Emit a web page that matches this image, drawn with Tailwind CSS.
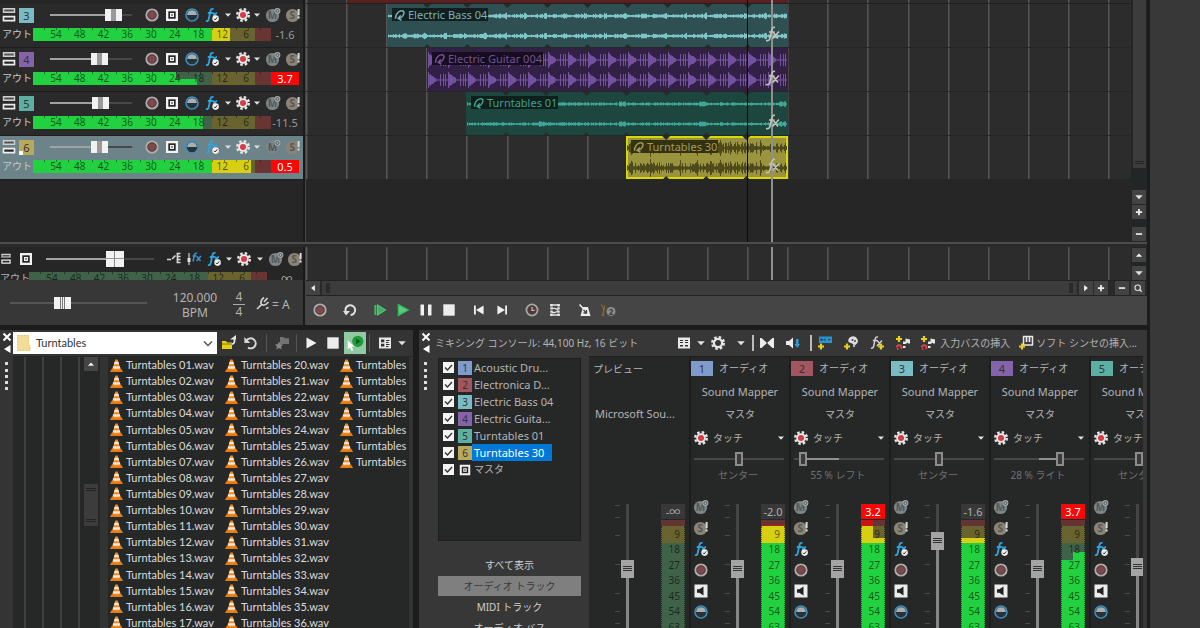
<!DOCTYPE html>
<html lang="ja">
<head>
    <meta charset="UTF-8">
    <meta name="viewport" content="width=device-width, initial-scale=1.0">
    <title>Turntables</title>
    <script src="https://cdn.jsdelivr.net/npm/@tailwindcss/browser@4"></script>
</head>
<body class="flex h-screen overflow-hidden bg-[#1c1c1c] font-['Noto_Sans','Noto_Sans_CJK_JP',sans-serif] text-[11px] leading-4 text-[#b4b4b4]">

    <!-- icon sprite, every symbol is drawn on a 16x16 box -->
    <svg class="hidden">
        <symbol id="rec" viewBox="0 0 16 16"><circle cx="8" cy="8" r="5.6" fill="#7c4a4c" stroke="#b0acac" stroke-width="2"/><circle cx="8" cy="8" r="4.2" fill="none" stroke="#4a3535" stroke-width=".8"/></symbol>
        <symbol id="sq" viewBox="0 0 16 16"><path fill="#f2f2f2" d="M2 2h12v12H2z"/><path fill="#262626" d="M4.3 4.3h7.4v7.4H4.3z"/><path fill="#f2f2f2" d="M6 6h4v4H6z"/><path fill="#444" d="M7.2 7.2h1.6v1.6H7.2z"/></symbol>
        <symbol id="phase" viewBox="0 0 16 16"><circle cx="8" cy="8" r="6" fill="#2a3238" stroke="#3a8fc0" stroke-width="1.6"/><path d="M3.2 8a4.8 4.8 0 0 1 9.6 0z" fill="#a9b0b2"/></symbol>
        <symbol id="fx" viewBox="0 0 16 16"><path d="M9.5 2.2C7.6 1.2 6.7 2.6 6.3 4.6L4.9 11.4C4.5 13.6 3.6 14.6 2 13.8M3.8 6h5M9 6.2c1.5 0 1.5 2 2 3.6M13 6c-1.6-.2-2.6 2.6-3.8 3.6" fill="none" stroke="#2fa3dc" stroke-width="1.9"/><circle cx="11.6" cy="11.6" r="3.3" fill="#eee"/><path d="M10 11.8l1.2 1.2 2-2.6" fill="none" stroke="#333"/></symbol>
        <symbol id="gear" viewBox="0 0 16 16"><circle cx="8" cy="8" r="5.8" fill="none" stroke="#e6e6e6" stroke-width="2.4" stroke-dasharray="2.5 2.055"/><circle cx="8" cy="8" r="4.8" fill="#f0eaea"/><circle cx="8" cy="8" r="3" fill="#d23c46"/></symbol>
        <symbol id="cog" viewBox="0 0 16 16"><circle cx="8" cy="8" r="5.8" fill="none" stroke="#e6e6e6" stroke-width="2.4" stroke-dasharray="2.5 2.055"/><circle cx="8" cy="8" r="4.1" fill="none" stroke="#e6e6e6" stroke-width="2.2"/></symbol>
        <symbol id="mute" viewBox="0 0 16 16"><circle cx="7.5" cy="8.5" r="6.6" fill="#7d8588"/><text x="7.5" y="12.3" font-size="10" font-weight="bold" text-anchor="middle" fill="#50585b">M</text><circle cx="12.4" cy="4" r="3" fill="#a9aeb0"/><circle cx="12.4" cy="4" r="1.5" fill="none" stroke="#555"/></symbol>
        <symbol id="solo" viewBox="0 0 16 16"><circle cx="7.5" cy="8.5" r="6.6" fill="#8a8478"/><text x="7.3" y="12.3" font-size="10" font-weight="bold" text-anchor="middle" fill="#5a564e">S</text><path d="M12.6 2h2v6h-2zM12.6 9.4h2v2h-2z" fill="#d8d8d8"/></symbol>
        <symbol id="stack" viewBox="0 0 16 16"><path d="M2.5 1.8h11v3.4h-11z" fill="#555" stroke="#cfcfcf" stroke-width="1.4"/><path d="M2.5 9.6h11v4h-11z" fill="#2a2a2a" stroke="#eee" stroke-width="1.6"/></symbol>
        <symbol id="caret" viewBox="0 0 16 16"><path d="M2 5h12L8 11.5z" fill="#e0e0e0"/></symbol>
        <symbol id="up" viewBox="0 0 16 16"><path d="M3 10.6h10L8 5.4z" fill="#f0f0f0"/></symbol>
        <symbol id="left" viewBox="0 0 16 16"><path d="M11 3v10L5 8z" fill="#f0f0f0"/></symbol>
        <symbol id="right" viewBox="0 0 16 16"><path d="M5 3v10l6-5z" fill="#f0f0f0"/></symbol>
        <symbol id="plus" viewBox="0 0 16 16"><path d="M6.6 3h2.8v3.6H13v2.8H9.4V13H6.6V9.4H3V6.6h3.6z" fill="#f0f0f0"/></symbol>
        <symbol id="minus" viewBox="0 0 16 16"><path d="M3 6.8h10v2.6H3z" fill="#f0f0f0"/></symbol>
        <symbol id="zoomer" viewBox="0 0 16 16"><circle cx="7.5" cy="7.5" r="4.4" fill="none" stroke="#ddd" stroke-width="1.8"/><path d="M10.5 10.5l3.5 3.5" stroke="#ddd" stroke-width="2.2"/></symbol>
        <symbol id="loop" viewBox="0 0 16 16"><path d="M4 10.5A4.9 4.9 0 1 1 8.6 13" fill="none" stroke="#e2e2e2" stroke-width="2"/><path d="M1 9h7l-4 4.6z" fill="#e2e2e2"/></symbol>
        <symbol id="undo" viewBox="0 0 16 16"><path d="M3.6 5.4A5 5 0 1 1 5 12.6" fill="none" stroke="#d6d6d6" stroke-width="2"/><path d="M1.4 2v6h6z" fill="#d6d6d6"/></symbol>
        <symbol id="playstart" viewBox="0 0 16 16"><path d="M2.4 3h2v10h-2z" fill="#35c25c"/><path d="M5.6 3L13.4 8l-7.8 5z" fill="#4aa868" stroke="#40d068" stroke-width="1.2"/></symbol>
        <symbol id="playg" viewBox="0 0 16 16"><path d="M3.4 2.6L13.2 8l-9.8 5.4z" fill="#5fc884" stroke="#2fbe58" stroke-width="1.4"/></symbol>
        <symbol id="playw" viewBox="0 0 16 16"><path d="M3.5 2.5L13.5 8l-10 5.5z" fill="#f0f0f0"/></symbol>
        <symbol id="pause" viewBox="0 0 16 16"><path d="M2.5 2.5H6v11H2.5zM10 2.5h3.5v11H10z" fill="#f0f0f0"/></symbol>
        <symbol id="stop" viewBox="0 0 16 16"><path d="M2.3 2.3h11.4v11.4H2.3z" fill="#ececec"/></symbol>
        <symbol id="first" viewBox="0 0 16 16"><path d="M3 3.4h1.8v9.2H3zM12.6 3.4v9.2L5 8z" fill="#f0f0f0"/></symbol>
        <symbol id="last" viewBox="0 0 16 16"><path d="M11.2 3.4H13v9.2h-1.8zM3.4 3.4v9.2L11 8z" fill="#f0f0f0"/></symbol>
        <symbol id="clock" viewBox="0 0 16 16"><circle cx="8" cy="8" r="5.6" fill="#4d3a3a" stroke="#aaa6a4" stroke-width="1.8"/><path d="M8 5v3.400h2.600" fill="none" stroke="#d0b8b0" stroke-width="1.2"/></symbol>
        <symbol id="ladder" viewBox="0 0 16 16"><path d="M4.5 2v12M11.5 2v12" fill="none" stroke="#e4e4e4" stroke-width="2.4" stroke-dasharray="2.4 .8"/><path d="M3 3h10M5 6.3h3l3 1.5M5 10.5h3l3-1.5M3 13h10" fill="none" stroke="#e4e4e4" stroke-width="1.3"/></symbol>
        <symbol id="metro" viewBox="0 0 16 16"><path d="M6 5h5l2.5 9h-10z" fill="#ececec"/><path d="M2.5 2.5L9 9.5" stroke="#ececec" stroke-width="1.5"/><path d="M6.5 8l3 3M9.5 8v3h-3" stroke="#444" fill="none" stroke-width="1.3"/></symbol>
        <symbol id="metrohelp" viewBox="0 0 16 16"><path d="M1 2.500l2.500 4V14M4.500 3v4L2 14" fill="none" stroke="#85652a" stroke-width="1.3"/><circle cx="11" cy="9.5" r="4.5" fill="#8d8d8d"/><text x="11" y="12.5" font-size="8" font-weight="bold" text-anchor="middle" fill="#3c3c3c">2</text></symbol>
        <symbol id="route" viewBox="0 0 16 16"><path d="M1 8.500h4M6 8l3.500-3.500M10.500 2.500h4M10.500 5.500h4M10.500 8.500h4M10.500 11.500h4M11.500 2v10" fill="none" stroke="#d8d8d8" stroke-width="1.6"/></symbol>
        <symbol id="busfx" viewBox="0 0 16 16"><path d="M3 2v12" stroke="#b8b8b8" stroke-width="1.4"/><path d="M1.500 7h3v4h-3z" fill="#e0e0e0"/><path d="M11 2.500C9 1.500 8.500 3.500 8.200 5L7 10.500M6.500 5h4M11 5.500l3.500 4.500M15 5l-4.500 5" fill="none" stroke="#3a94cc" stroke-width="1.5"/></symbol>
        <symbol id="fork" viewBox="0 0 16 16"><path d="M2 14L6.500 9.500C5 7 6 5 9 2.500M6.500 9.500c2.500 1.500 4.500.500 7-2.500M9 7l3.500-4M11 13.500l2.500-1" fill="none" stroke="#cfcfcf" stroke-width="1.7"/></symbol>
        <symbol id="folderup" viewBox="0 0 16 16"><path d="M1 6h4l1 1.500h5V14H1z" fill="#e4cf18"/><path d="M1 9h10" stroke="#8a7d10"/><path d="M11 9c3 0 2.500-3 2.500-6" fill="none" stroke="#e6e6e6" stroke-width="1.8"/><path d="M9 4.500h6V0z" fill="#e6e6e6"/></symbol>
        <symbol id="favfolder" viewBox="0 0 16 16"><path d="M6 2h3.500l1 1.300H15V9H6z" fill="#727272"/><path d="M5 6.500l1.300 2.700 3 .3-2.300 2 .7 3L5 13l-2.700 1.500.7-3-2.300-2 3-.3z" fill="#868686"/></symbol>
        <symbol id="views" viewBox="0 0 16 16"><path d="M2 2.500h12v11H2z" fill="#e8e8e8"/><path d="M4 4.500h3.300v2.800H4zM4 8.700h3.300v2.800H4zM9 5h3.500v1H9zM9 7h2.500v1H9zM9 9h3.500v1H9zM9 11h2.500v1H9z" fill="#333"/></symbol>
        <symbol id="mixviews" viewBox="0 0 16 16"><path d="M2 2.500h12v11H2z" fill="#e8e8e8"/><path d="M4 5h3v1H4zM4 7h3v1H4zM9 5h3v1H9zM9 7h3v1H9zM4 10h3v1.500H4zM9 10h3v1.500H9z" fill="#333"/></symbol>
        <symbol id="butter" viewBox="0 0 16 16"><path d="M1 3h1.500l5 4.500v1L2.500 13H1zM15 3h-1.500l-5 4.500v1l5 4.500H15z" fill="#ececec"/></symbol>
        <symbol id="dim" viewBox="0 0 16 16"><path d="M1 6h3l4-3.500v11L4 10H1z" fill="#ececec"/><path d="M11 4h2.500v5H15l-2.800 4L9.500 9H11z" fill="#2c9bd8"/></symbol>
        <symbol id="addbus" viewBox="0 0 16 16"><path d="M2 1.500h13v6.500H2z" fill="#2b93cf"/><path d="M4 3.500v2.500M4 4.700h2.500M8 3.500v2.500M11 4.700h2.500" stroke="#123f5c" fill="none"/><path d="M4 8.500v6M1 11.500h6" stroke="#e6cf20" stroke-width="2.2"/></symbol>
        <symbol id="addmix" viewBox="0 0 16 16"><path d="M5.500 7a4.700 4.700 0 1 1 7 3L9 8.500z" fill="#dedede"/><path d="M10 9h2v3h-2z" fill="#bbb"/><circle cx="9.5" cy="5" r="1" fill="#444"/><circle cx="12" cy="6" r="1" fill="#444"/><path d="M4 8.500v6M1 11.500h6" stroke="#e6cf20" stroke-width="2.2"/></symbol>
        <symbol id="addfx" viewBox="0 0 16 16"><path d="M9 2.200C7 1.200 6.300 3 6 4.800L4.700 11C4.300 13 3.300 13.600 2 13M3.800 5.500h5M8.500 6l4 5M13 5.500L8 11" fill="none" stroke="#d0d0d0" stroke-width="1.5"/><path d="M12 8.500v6M9 11.500h6" stroke="#e6cf20" stroke-width="2.2"/></symbol>
        <symbol id="addin" viewBox="0 0 16 16"><path d="M4 1v6M1 4h6" stroke="#e6cf20" stroke-width="2.2"/><path d="M8 6.500h2.500V3.500l4.500 1v4h-2V7.500L10.500 9H8z" fill="#e8e8e8"/><path d="M2 12.500a2.200 2.200 0 0 1 4.400 0v1.500M2 14h1.500" fill="none" stroke="#d8404c" stroke-width="2"/><path d="M8 12h2.500" stroke="#e8e8e8" stroke-width="2"/></symbol>
        <symbol id="addsynth" viewBox="0 0 16 16"><path d="M5.500 1.500h9v8.500h-9z" fill="#3a3a3a" stroke="#e8e8e8" stroke-width="1.5"/><path d="M8.500 2v5M11.500 2v5" stroke="#e8e8e8" stroke-width="1.7"/><path d="M4 8.500v6M1 11.500h6" stroke="#e6cf20" stroke-width="2.2"/></symbol>
        <symbol id="spk" viewBox="0 0 16 16"><path d="M1.500 1.500h13v13h-13z" fill="#ececec"/><path d="M4 6.300h2.300L10.500 3.500v9L6.300 9.700H4z" fill="#222"/></symbol>
        <symbol id="autoplay" viewBox="0 0 16 16"><circle cx="10.5" cy="6.5" r="5" fill="#1f9a3a"/><path d="M9 4v5l4-2.500z" fill="#0d5520"/><path d="M1.500 5.500l6 5.500-2.700.300L6.500 14.500l-1.600.500L3.500 12 1.500 13.500z" fill="#fff"/></symbol>
        <symbol id="cone" viewBox="0 0 16 16"><path d="M3 11.500h10l2 3.500H1z" fill="#e87a12"/><path d="M6.800 1.500h2.400L12.500 12c-2 1.500-7 1.500-9 0z" fill="#f08a1c"/><path d="M6 4h4l.800 2.600H5.200zM4.500 8.800h7l.600 2c-2 1-6.300 1-8.200 0z" fill="#f0e8dc"/></symbol>
        <symbol id="wavloop" viewBox="0 0 16 16"><path d="M2 13c0-6 3-9 7-10.500 4-.5 5 1.500 4 4-1 3-3.500 5.500-7 6M9 8.500l-3.500 4L10 15" fill="none" stroke="currentColor" stroke-width="2"/></symbol>
        <symbol id="evfx" viewBox="0 0 16 16"><path d="M10 1.500C8 .500 7 3 6.500 5l-1.500 7C4.500 14.500 3 15 1 14.500M4 6h5.500M8.500 6.500l4.500 6M14 5.500L7.500 12.500" fill="none" stroke="#c4c4b8" stroke-width="1.6"/></symbol>
    </svg>

    <main class="flex min-w-0 flex-1 flex-col">

        <!-- track headers and timeline -->
        <section class="flex h-[242px] shrink-0 overflow-hidden">
            <div class="flex w-[303px] shrink-0 flex-col bg-[#262626] pt-1" id="tracks"></div>
            <div class="w-[3px] shrink-0 border-r border-[#444] bg-[#1a1a1a]"></div>
            <div class="relative flex min-w-0 flex-1 flex-col overflow-hidden bg-[#262626]" id="timeline">
                <svg class="absolute inset-x-0 top-0 h-[179px] w-full bg-[#2c2c2c]" data-grid></svg>
            </div>
            <div class="flex w-4 shrink-0 flex-col items-center bg-[#232626]">
                <div class="flex h-[168px] w-[13px] flex-col justify-end bg-[#3c3c3c] pb-1"><div class="mx-0.5 h-[3px] border-y border-[#222]"></div></div>
                <button class="mt-[22px] h-3.5 w-3.5 bg-[#434343] p-0.5" aria-label="下へ"><svg class="size-2.5"><use href="#caret"/></svg></button>
                <button class="mt-px h-3.5 w-3.5 bg-[#434343] p-0.5" aria-label="高さを拡大"><svg class="size-2.5"><use href="#plus"/></svg></button>
                <button class="mt-2 h-3.5 w-3.5 bg-[#434343] p-0.5" aria-label="高さを縮小"><svg class="size-2.5"><use href="#minus"/></svg></button>
            </div>
        </section>
        <div class="h-[5px] shrink-0 border-t-2 border-[#4c4c4c] bg-[#2a2a2a]"></div>

        <!-- master bus, tempo, transport -->
        <section class="flex shrink-0">
            <div class="flex w-[303px] shrink-0 flex-col">
                <div class="h-[33px] overflow-hidden bg-[#262626]" id="bus"></div>
                <div class="flex h-[45px] items-center bg-[#373737]">
                    <input type="range" aria-label="再生速度" max="121" value="44" class="ml-2.5 h-3 w-[137px] appearance-none bg-[linear-gradient(#555,#555)] bg-[size:100%_2px] bg-center bg-no-repeat [&::-webkit-slider-thumb]:h-3 [&::-webkit-slider-thumb]:w-[17px] [&::-webkit-slider-thumb]:appearance-none [&::-webkit-slider-thumb]:bg-[linear-gradient(to_right,#f2f2f2_6px,#777_6px_7px,#f2f2f2_7px_8px,#777_8px_9px,#f2f2f2_9px_10px,#777_10px_11px,#f2f2f2_11px)]">
                    <div class="ml-5 w-14 pt-1 text-center text-xs leading-[15px]">120.000<br>BPM</div>
                    <div class="ml-2.5 w-3 pt-1 text-center text-xs leading-[14px]"><div class="border-b border-[#aaa]">4</div><div>4</div></div>
                    <svg class="ml-2.5 size-4"><use href="#fork"/></svg>
                    <span class="ml-px pt-1 text-xs">= A</span>
                </div>
            </div>
            <div class="w-[3px] shrink-0 border-r border-[#444] bg-[#1a1a1a]"></div>
            <div class="flex min-w-0 flex-1 flex-col">
                <div class="flex h-[33px]">
                    <div class="relative min-w-0 flex-1 bg-[#2c2c2c]">
                        <svg class="h-full w-full" data-grid></svg>
                        <div class="absolute inset-y-0 left-[465px] w-0.5 bg-[#8f8f8f]"></div>
                    </div>
                    <div class="flex w-4 flex-col items-center gap-1 bg-[#232626] pt-px">
                        <button class="h-3.5 w-3.5 shrink-0 bg-[#434343] p-0.5" aria-label="上へ"><svg class="size-2.5"><use href="#up"/></svg></button>
                        <button class="h-3.5 w-3.5 shrink-0 bg-[#434343] p-0.5" aria-label="下へ"><svg class="size-2.5"><use href="#caret"/></svg></button>
                    </div>
                </div>
                <div class="flex h-4 items-center border-y border-[#222] bg-[#2a2a2a]">
                    <button class="h-3.5 w-3.5 bg-[#434343] p-0.5" aria-label="左へ"><svg class="size-2.5"><use href="#left"/></svg></button>
                    <div class="ml-0.5 flex h-3.5 flex-1 items-center justify-between bg-[#3c3c3c] px-1"><div class="h-2.5 w-1 bg-[#2a2a2a]"></div><div class="h-2.5 w-1 bg-[#2a2a2a]"></div></div>
                    <button class="ml-0.5 h-3.5 w-3.5 bg-[#434343] p-0.5" aria-label="右へ"><svg class="size-2.5"><use href="#right"/></svg></button>
                    <button class="ml-px h-3.5 w-3.5 bg-[#434343] p-0.5" aria-label="拡大"><svg class="size-2.5"><use href="#plus"/></svg></button>
                    <button class="ml-[7px] h-3.5 w-3.5 bg-[#434343] p-0.5" aria-label="縮小"><svg class="size-2.5"><use href="#minus"/></svg></button>
                    <button class="mr-0.5 ml-0.5 h-3.5 w-3.5 bg-[#434343] p-0.5" aria-label="ズーム"><svg class="size-2.5"><use href="#zoomer"/></svg></button>
                </div>
                <div class="flex h-[29px] items-center bg-[#454545] pb-0.5 pl-0.5" id="transport"></div>
            </div>
        </section>

        <section class="mt-[5px] flex min-h-0 flex-1">
            <!-- explorer -->
            <div class="flex w-[413px] shrink-0 bg-[#343434]">
                <div class="flex w-[13px] shrink-0 flex-col items-center" data-dock></div>
                <div class="flex min-w-0 flex-1 flex-col">
                    <div class="flex h-[26px] shrink-0 items-center">
                        <div class="relative h-[22px] w-[204px]">
                            <select aria-label="フォルダー" class="h-full w-full appearance-none bg-white pl-[23px] font-['Lato','Noto_Sans_CJK_JP',sans-serif] text-[11px] text-[#333]"><option>Turntables</option></select>
                            <svg class="pointer-events-none absolute top-[3px] left-1 h-4 w-3.5"><path d="M.5.500h11v10h1.500v5H.5z" fill="#f3dc95" stroke="#e2c56a" stroke-dasharray="2 1"/></svg>
                            <svg class="pointer-events-none absolute top-2 right-1 h-2 w-2.5"><path d="M1 1.500l4 4 4-4" fill="none" stroke="#555" stroke-width="1.5"/></svg>
                        </div>
                        <button class="ml-px w-[22px]" aria-label="上のフォルダー"><svg class="mx-auto size-4"><use href="#folderup"/></svg></button>
                        <button class="w-[22px]" aria-label="更新"><svg class="mx-auto size-4"><use href="#undo"/></svg></button>
                        <i class="ml-1 h-[18px] w-px bg-[#555]"></i>
                        <button class="w-[29px]" aria-label="お気に入り"><svg class="mx-auto size-4"><use href="#favfolder"/></svg></button>
                        <i class="h-[18px] w-px bg-[#555]"></i>
                        <button class="ml-[3px] w-[22px]" aria-label="再生"><svg class="mx-auto size-4"><use href="#playw"/></svg></button>
                        <button class="w-[22px]" aria-label="停止"><svg class="mx-auto size-4"><use href="#stop"/></svg></button>
                        <button class="h-[22px] w-[22px] bg-[#8fcaa3]" aria-label="自動プレビュー"><svg class="mx-auto size-[18px]"><use href="#autoplay"/></svg></button>
                        <i class="ml-[3px] h-[18px] w-px bg-[#555]"></i>
                        <button class="ml-1 w-[22px]" aria-label="表示"><svg class="mx-auto size-4"><use href="#views"/></svg></button>
                        <button class="w-3" aria-label="表示メニュー"><svg class="mx-auto size-2.5"><use href="#caret"/></svg></button>
                    </div>
                    <div class="flex min-h-0 flex-1 bg-[#262828] pt-px">
                        <div class="flex w-[69px] shrink-0 justify-between pr-0.5 pl-[11px]">
                            <i class="w-0.5 bg-[#3f4040]"></i><i class="w-0.5 bg-[#3f4040]"></i><i class="w-0.5 bg-[#3f4040]"></i><i class="w-0.5 bg-[#3f4040]"></i>
                        </div>
                        <div class="flex w-[18px] shrink-0 flex-col items-center">
                            <button class="h-3.5 w-3.5 shrink-0 bg-[#454545] p-0.5" aria-label="上へ"><svg class="size-2.5"><use href="#up"/></svg></button>
                            <div class="mt-[113px] flex h-[42px] w-3.5 shrink-0 flex-col justify-between bg-[#3c3c3c] px-0.5 py-1"><i class="h-[3px] border-y border-[#222]"></i><i class="h-[3px] border-y border-[#222]"></i></div>
                        </div>
                        <div class="w-2 shrink-0 bg-[#333]"></div>
                        <div class="min-w-0 flex-1 overflow-hidden">
                            <ul class="ml-px grid h-[274px] grid-flow-col grid-rows-[repeat(17,1fr)] justify-start font-['Lato',sans-serif] text-[11px] text-[#dcdcdc]" id="files"></ul>
                        </div>
                        <div class="w-1 shrink-0 bg-[#333]"></div>
                    </div>
                </div>
            </div>

            <!-- mixing console -->
            <div class="ml-1.5 flex min-w-0 flex-1 bg-[#373737]">
                <div class="flex w-[13px] shrink-0 flex-col items-center" data-dock></div>
                <div class="flex min-w-0 flex-1 flex-col">
                    <div class="flex h-[26px] shrink-0 items-center pl-[3px] text-[10px] whitespace-nowrap">
                        <h1>ミキシング コンソール: 44,100 Hz, 16 ビット</h1>
                        <div class="mr-2.5 ml-auto flex items-center">
                            <button class="w-6" aria-label="表示"><svg class="mx-auto size-4"><use href="#mixviews"/></svg></button>
                            <button class="w-2.5" aria-label="表示メニュー"><svg class="mx-auto size-2.5"><use href="#caret"/></svg></button>
                            <button class="w-6" aria-label="設定"><svg class="mx-auto size-4"><use href="#cog"/></svg></button>
                            <button class="w-[22px]" aria-label="設定メニュー"><svg class="mx-auto size-2.5"><use href="#caret"/></svg></button>
                            <i class="h-4 w-0.5 bg-[#bbb]"></i>
                            <button class="w-[26px]" aria-label="ダウンミックス"><svg class="mx-auto size-4"><use href="#butter"/></svg></button>
                            <button class="w-[26px]" aria-label="ディム"><svg class="mx-auto size-4"><use href="#dim"/></svg></button>
                            <i class="ml-1 h-4 w-0.5 bg-[#bbb]"></i>
                            <button class="w-[26px]" aria-label="トラックの挿入"><svg class="mx-auto size-4"><use href="#addbus"/></svg></button>
                            <button class="w-[26px]" aria-label="バスの挿入"><svg class="mx-auto size-4"><use href="#addmix"/></svg></button>
                            <button class="w-[26px]" aria-label="エフェクトの挿入"><svg class="mx-auto size-4"><use href="#addfx"/></svg></button>
                            <button class="w-[26px]" aria-label="入力の挿入"><svg class="mx-auto size-4"><use href="#addin"/></svg></button>
                            <button class="ml-1 flex items-center gap-1"><svg class="size-4"><use href="#addin"/></svg>入力バスの挿入</button>
                            <button class="ml-2 flex items-center gap-0.5"><svg class="size-4"><use href="#addsynth"/></svg>ソフト シンセの挿入...</button>
                        </div>
                    </div>
                    <div class="flex min-h-0 flex-1 overflow-hidden">
                        <div class="ml-1.5 flex w-[143px] shrink-0 flex-col pt-0.5 text-[10px]">
                            <ul class="flex h-[183px] shrink-0 flex-col border border-[#1e1e1e] bg-[#262828]" id="channels"></ul>
                            <button class="mt-3 h-[23px] shrink-0 text-[#cfcfcf]">すべて表示</button>
                            <button class="h-5 shrink-0 bg-[#7f7f7f] text-[#3a3a3a]">オーディオ トラック</button>
                            <button class="h-[22px] shrink-0 text-[#cfcfcf]">MIDI トラック</button>
                            <button class="h-5 shrink-0 text-[#cfcfcf]">オーディオ バス</button>
                        </div>
                        <div class="mr-1 ml-2 flex min-w-0 flex-1 overflow-hidden border-t border-[#1c1c1c] bg-[#262828]" id="strips"></div>
                    </div>
                </div>
            </div>
        </section>
    </main>
    <aside class="w-[53px] shrink-0 border-l-[3px] border-[#1c1c1c] bg-[#383838]"></aside>

    <script>
        const byId = (id) => document.getElementById(id);
        const icon = (name, cls = 'size-4') => `<svg class="${cls}"><use href="#${name}"/></svg>`;
        const cell = (name, label, w = 'w-5', cls = 'size-4') =>
            `<button class="${w} flex shrink-0 justify-center" aria-label="${label}">${icon(name, cls)}</button>`;

        // ---- track headers ----
        // level is the lit length in px of the upper and lower channel
        const tracks = [
            { n: 3, bg: 'bg-[#79bcc4]', vol: 56, level: [197, 197], peak: '-1.6' },
            { n: 4, bg: 'bg-[#8563ab]', vol: 42, level: [143, 164], peak: '3.7', clip: true },
            { n: 5, bg: 'bg-[#5cb0a2]', vol: 43, level: [170, 170], peak: '-11.5' },
            { n: 6, bg: 'bg-[#b9a95c]', vol: 42, level: [218, 218], peak: '0.5', clip: true, selected: true },
        ];
        const scale = [54, 48, 42, 36, 30, 24, 18, 12, 6];

        function levelBar(level) {
            const lit = level.map(px => `<div class="h-1/2 bg-[linear-gradient(to_right,#22d13f_179px,#d6cf12_179px_222px,#a01818_222px)]" style="width:${px}px"></div>`).join('');
            return `<div class="relative h-[13px] w-[238px] shrink-0 bg-[linear-gradient(to_right,#3f6248_179px,#68632f_179px_222px,#693434_222px)] text-[10px] leading-[13px] text-black/60">
                <div class="h-full">${lit}</div>
                <div class="absolute inset-0 bg-[repeating-linear-gradient(to_right,transparent_0_11px,#0006_11px_12px)] bg-[size:100%_2px] bg-[position:0_0,0_100%] bg-repeat-x"></div>
                <div class="absolute inset-y-0 left-[11px] grid w-[214px] grid-cols-9 text-center">${scale.map(s => `<span>${s}</span>`).join('')}</div>
            </div>`;
        }

        function trackRow(t) {
            return `<div class="h-11 shrink-0 border-b border-[#1e1e1e] ${t.selected ? 'bg-[#6c8489]' : 'bg-[#2a2a2a]'}">
                <div class="flex h-[22px] items-center">
                    ${cell('stack', 'トラックの表示', 'w-[17px]', 'size-4')}
                    <span class="relative ml-0.5 h-[15px] w-[15px] ${t.bg} text-center text-[11px] leading-[15px] text-[#333]">${t.n}${t.selected ? '<i class="absolute bottom-0 left-0 size-1 bg-white"></i>' : ''}</span>
                    <input type="range" aria-label="トラック ${t.n} の音量" max="66" value="${t.vol}" style="--v:${t.vol / 66 * 100}%" class="mx-4 h-3 w-[82px] appearance-none bg-[linear-gradient(to_right,#a2a2a2_var(--v),#484848_var(--v))] bg-[size:100%_2px] bg-center bg-no-repeat [&::-webkit-slider-thumb]:h-3 [&::-webkit-slider-thumb]:w-[17px] [&::-webkit-slider-thumb]:appearance-none [&::-webkit-slider-thumb]:bg-[linear-gradient(to_right,#f2f2f2_6px,#999_6px_11px,#f2f2f2_11px)]">
                    <span class="-ml-1.5 flex items-center">
                        ${cell('rec', '録音')}${cell('sq', 'バス')}${cell('phase', '位相')}${cell('fx', 'エフェクト')}${cell('caret', 'エフェクト メニュー', 'w-3', 'size-2')}${cell('gear', 'オートメーション', 'w-[17px]')}${cell('caret', 'オートメーション メニュー', 'w-3', 'size-2')}${cell('mute', 'ミュート')}${cell('solo', 'ソロ')}
                    </span>
                </div>
                <div class="flex items-center pt-0.5">
                    <span class="w-[33px] pl-0.5 text-[10px] leading-[13px] whitespace-nowrap text-[#c8c8c8]">アウト</span>
                    ${levelBar(t.level)}
                    <span class="h-[13px] w-7 text-center text-[11px] leading-[13px] ${t.clip ? 'bg-[#fb0505] text-white' : 'text-[#999]'}">${t.peak}</span>
                </div>
            </div>`;
        }
        byId('tracks').innerHTML = tracks.map(trackRow).join('');

        byId('bus').innerHTML = `<div class="flex h-6 items-center">
                ${cell('stack', 'バスの表示', 'w-3', 'size-4')}
                ${cell('sq', 'マスタ', 'ml-1.5 w-4', 'size-4')}
                <input type="range" aria-label="マスタの音量" max="90" value="60" style="--v:63%" class="ml-3 h-4 w-[108px] appearance-none bg-[linear-gradient(to_right,#a2a2a2_var(--v),#484848_var(--v))] bg-[size:100%_2px] bg-center bg-no-repeat [&::-webkit-slider-thumb]:h-4 [&::-webkit-slider-thumb]:w-[18px] [&::-webkit-slider-thumb]:appearance-none [&::-webkit-slider-thumb]:bg-[linear-gradient(to_right,transparent_8px,#888_8px_9px,transparent_9px),linear-gradient(#f2f2f2_7px,#999_7px_8px,#f2f2f2_8px)]">
                <span class="ml-2.5 flex items-center">${cell('route', 'ルーティング')}${cell('busfx', 'バス エフェクト')}${cell('fx', 'エフェクト')}${cell('caret', 'エフェクト メニュー', 'w-2.5', 'size-2')}${cell('gear', 'オートメーション')}${cell('caret', 'オートメーション メニュー', 'w-3', 'size-2')}${cell('mute', 'ミュート')}${cell('solo', 'ソロ', 'w-[17px]')}</span>
            </div>
            <div class="flex pt-px"><span class="w-[29px] shrink-0 overflow-hidden text-[10px] leading-[13px] whitespace-nowrap">アウト</span>${levelBar([0, 0])}<span class="w-9 text-center leading-[13px]">-∞</span></div>`;

        // ---- transport ----
        byId('transport').innerHTML = [['rec', '録音'], ['loop', 'ループ再生', 1], ['playstart', '先頭から再生', 1], ['playg', '再生'], ['pause', '一時停止'], ['stop', '停止'],
            ['first', '先頭へ', 1], ['last', '末尾へ'], ['clock', 'タップ テンポ', 1], ['ladder', 'グリッド'], ['metro', 'メトロノーム', 1], ['metrohelp', 'カウントイン']]
            .map(([n, label, gap]) => cell(n, label, gap ? 'ml-[7px] w-[23px]' : 'w-[23px]')).join('');

        // ---- timeline ----
        const BEAT = 40.1;
        document.querySelectorAll('[data-grid]').forEach(svg => {
            let lines = '';
            for (let i = 0; i < 21; i++) lines += `<rect x="${Math.round(i * BEAT)}" width="1.5" height="100%" fill="#565656"/>`;
            svg.innerHTML = lines;
        });

        const noise = (i) => Math.abs(Math.sin(i * 12.9898) * 43758.5453) % 1;
        // half height of the waveform at x
        const shapes = {
            bass: x => 0.8 + 1.6 * noise(x) * (x % 20 > 5 ? 1 : 0.4) + (x % 20 > 16 ? 1 : 0),
            guitar: x => { const p = x % 20; return p === 1 ? 8 : p > 1 && p < 9 ? 7 - p * 0.7 + noise(x) : p === 13 || p === 16 || p === 18 ? 6 : 0.6; },
            thin: x => 0.6 + noise(x) * 1.2 + (x % 80 > 72 ? 1 : 0),
            scratch: x => { const p = x % 40; return 0.8 + (noise(x) > 0.4 ? noise(x + 3) * 5 : 1) + (p > 3 && p < 7 ? 3 : p === 14 || p === 24 || p === 31 ? 3 : 0); },
        };
        const clips = [
            { name: 'Electric Bass 04', start: 81, end: 482, kind: 'bass', wave: '#7fc4c6', bg: 'bg-[#2e5052]', text: 'text-[#7ab5b8]', label: 'bg-[#131f1f]' },
            { name: 'Electric Guitar 004', start: 121, end: 482, kind: 'guitar', wave: '#7450a0', bg: 'bg-[#332045]', text: 'text-[#72529a]', label: 'bg-[#160e1e]' },
            { name: 'Turntables 01', start: 160, end: 482, kind: 'thin', wave: '#3fa596', bg: 'bg-[#1d463f]', text: 'text-[#3fa18e]', label: 'bg-[#0f201c]' },
            { name: 'Turntables 30', start: 320, end: 482, kind: 'scratch', wave: '#4e4a1c', bg: 'bg-[#9a943f] outline-2 -outline-offset-2 outline-[#d8d60e]', text: 'text-[#a09b62]', label: 'bg-[#35330f]' },
        ];

        function waveform(c) {
            const w = c.end - c.start;
            let d = '';
            for (let x = 1; x < w - 1; x++) {
                const a = shapes[c.kind](x);
                [12, 32].forEach(y => { d += `M${x + 0.5} ${(y - a).toFixed(1)}v${(a * 2).toFixed(1)}`; });
            }
            // loop notches on both edges
            let notch = '';
            for (let x = BEAT; x < w - 4; x += BEAT) notch += `M${x - 4} 0h8l-4 4zM${x - 4} 44h8l-4-4z`;
            return `<svg class="absolute inset-0 h-full w-full"><path d="${d}" stroke="${c.wave}"/><path d="${notch}" fill="#2a2a2a"/></svg>`;
        }

        byId('timeline').insertAdjacentHTML('beforeend', `
            <div class="relative h-1 shrink-0 border-b border-[#202020]"><div class="absolute inset-y-0 left-[41px] w-[441px] bg-[#5a1f1f]"></div></div>
            ${clips.map(c => `<div class="relative h-11 shrink-0 border-b border-[#262626]">
                <div class="absolute inset-y-0 ${c.bg}" style="left:${c.start}px;width:${c.end - c.start}px">
                    ${waveform(c)}
                    <div class="absolute top-1 left-[5px] flex h-[13px] items-center gap-0.5 pr-px pl-0.5 ${c.label} ${c.text} leading-[13px] whitespace-nowrap">${icon('wavloop', 'size-3')}<span>${c.name}</span></div>
                </div>
            </div>`).join('')}
            <div class="absolute inset-y-0 left-[441px] w-px bg-[#0c0c0c]"></div>
            <div class="absolute inset-y-0 left-[465px] w-0.5 bg-[#8f8f8f]"></div>
            <div class="absolute top-[26px] left-[459px] flex flex-col gap-7">${clips.map(() => icon('evfx')).join('')}</div>`);

        // ---- docking handles ----
        document.querySelectorAll('[data-dock]').forEach(el => {
            el.innerHTML = `<button aria-label="閉じる" class="mt-0.5"><svg class="size-2.5"><path d="M1.500 1.500l7 7M8.500 1.500l-7 7" stroke="#fff" stroke-width="2"/></svg></button>
                <button aria-label="折りたたむ" class="mt-0.5"><svg class="size-2.5"><path d="M8.500 1v8L2 5z" fill="#fff"/></svg></button>
                <i class="mt-2 h-7 border-l-[3px] border-dotted border-[#ddd]"></i>`;
        });

        // ---- file list ----
        const files = [];
        for (let i = 1; i <= 17; i++) files.push(`Turntables ${String(i).padStart(2, '0')}.wav`);
        for (let i = 20; i <= 36; i++) files.push(`Turntables ${i}.wav`);
        for (let i = 0; i < 7; i++) files.push('Turntables');
        byId('files').innerHTML = files.map(f =>
            `<li class="flex w-[115px] items-center gap-0.5 whitespace-nowrap">${icon('cone', 'size-[15px] shrink-0')}${f}</li>`).join('');

        // ---- mixer ----
        const channels = [
            { n: 1, name: 'Acoustic Dru...', bg: 'bg-[#7f9bcb]' },
            { n: 2, name: 'Electronica D...', bg: 'bg-[#a35560]' },
            { n: 3, name: 'Electric Bass 04', bg: 'bg-[#79bcc4]' },
            { n: 4, name: 'Electric Guita...', bg: 'bg-[#8563ab]' },
            { n: 5, name: 'Turntables 01', bg: 'bg-[#5cb0a2]' },
            { n: 6, name: 'Turntables 30', bg: 'bg-[#b9a95c]', selected: true },
            { name: 'マスタ' },
        ];
        byId('channels').innerHTML = channels.map((c, i) => `<li class="flex h-[17px] shrink-0 items-center pl-1">
            <input type="checkbox" checked id="ch${i}" class="size-[11px] appearance-none bg-[#f4f4f4]">
            <svg class="pointer-events-none -ml-[11px] size-[11px] shrink-0"><path d="M2 5.500l2.500 2.500 4.500-5" fill="none" stroke="#333" stroke-width="1.4"/></svg>
            ${c.n ? `<span class="ml-1 h-3.5 w-3.5 ${c.bg} text-center text-[10px] leading-[14px] text-[#333]">${c.n}</span>` : icon('sq', 'ml-1 size-3.5')}
            <label for="ch${i}" class="pl-0.5 whitespace-nowrap ${c.selected ? 'bg-[#0078d7] pr-2 text-white' : ''} ${c.n ? 'text-[11px]' : 'text-[10px]'} leading-[17px]">${c.name}</label>
        </li>`).join('');

        // fader is the thumb offset from the top; lit is where each channel starts, in px
        const strips = [
            { n: 1, bg: channels[0].bg, pan: 50, panText: 'センター', fader: 56, lit: [5, 5], peak: '-2.0' },
            { n: 2, bg: channels[1].bg, pan: 6, panText: '55 % レフト', fader: 56, lit: [0, 18], peak: '3.2', clip: true },
            { n: 3, bg: channels[2].bg, pan: 50, panText: 'センター', fader: 28, lit: [18, 18], peak: '-1.6' },
            { n: 4, bg: channels[3].bg, pan: 76, panText: '28 % ライト', fader: 56, lit: [40, 32], peak: '3.7', clip: true },
            { n: 5, bg: channels[4].bg, pan: 50, panText: 'センター', fader: 54, lit: [18, 18], peak: '-11.5' },
        ];

        function fader(name, offset, lit, peak, clip) {
            return `<svg class="h-[130px] w-[5px] shrink-0"><path d="M0 1.500h5M0 13.500h5M0 31.500h5M0 60.500h5M0 89.500h5M0 107.500h5M0 119.500h5" stroke="#4a4a4a"/></svg>
                <input type="range" aria-label="${name}" max="144" value="${144 - offset}" style="--v:${offset + 9}px" class="h-[162px] w-3.5 shrink-0 appearance-none bg-[linear-gradient(#454545_var(--v),#868686_var(--v))] bg-[size:3px_100%] bg-center bg-no-repeat [direction:rtl] [writing-mode:vertical-lr] [&::-webkit-slider-thumb]:h-[18px] [&::-webkit-slider-thumb]:w-[13px] [&::-webkit-slider-thumb]:appearance-none [&::-webkit-slider-thumb]:border-2 [&::-webkit-slider-thumb]:border-[#a4a4a4] [&::-webkit-slider-thumb]:bg-[linear-gradient(#a4a4a4_4px,#333_4px_5px,#a4a4a4_5px_6px,#333_6px_7px,#a4a4a4_7px_8px,#333_8px_9px,#a4a4a4_9px)]">
                <div class="mr-1 ml-auto w-6 shrink-0">
                    <div class="h-[15px] text-center text-[11px] leading-[15px] ${clip ? 'bg-[#fb0505] text-white' : 'bg-[#383838] text-[#b0b0b0]'}">${peak}</div>
                    <div class="relative mt-px h-[170px] bg-[linear-gradient(#633434_6px,#68632f_6px_23px,#3f6248_23px)]">
                        <div class="flex h-full">${lit.map(px => `<div class="w-1/2 bg-[linear-gradient(#c81414_6px,#d6cf12_6px_23px,#22d13f_23px)]" style="clip-path:inset(${px}px 0 0 0)"></div>`).join('')}</div>
                        <div class="absolute inset-x-0 top-1.5 grid h-[108px] grid-rows-7 border-x border-dotted border-black/50 pr-1 text-right text-[10px] text-black/60">${[9, 18, 27, 36, 45, 54, 63].map(v => `<div>${v}</div>`).join('')}</div>
                    </div>
                </div>`;
        }

        byId('strips').innerHTML = `<div class="flex w-[102px] shrink-0 flex-col border-r-2 border-[#1d1d1d] pt-1">
                <h2 class="pl-1 text-[10px]">プレビュー</h2>
                <div class="mt-[29px] pl-1.5 text-[11px]">Microsoft Sou...</div>
                <div class="mt-[82px] flex pl-[26px]">${fader('プレビューの音量', 56, [170, 170], '-∞')}</div>
            </div>` + strips.map(s => `<div class="flex w-[100px] shrink-0 flex-col border-r-2 border-[#1d1d1d] pt-[3px]">
                <div class="flex items-center gap-1.5 text-[10px]"><span class="h-[15px] w-[22px] ${s.bg} text-center text-[11px] leading-[15px] text-[#333]">${s.n}</span>オーディオ</div>
                <button class="mt-2 text-[11px]">Sound Mapper</button>
                <button class="mt-1.5 text-[10px]">マスタ</button>
                <button class="mt-2 flex items-center pr-1 pl-0.5 text-[10px]">${icon('gear', 'size-4 shrink-0')}<span class="ml-1">タッチ</span>${icon('caret', 'ml-auto size-2')}</button>
                <input type="range" aria-label="トラック ${s.n} のパン" value="${s.pan}" style="--a:${Math.min(s.pan, 50)}%;--b:${Math.max(s.pan, 50)}%" class="mt-1.5 ml-[3px] h-3.5 w-[90px] appearance-none bg-[linear-gradient(to_right,#484848_var(--a),#909090_var(--a)_var(--b),#484848_var(--b))] bg-[size:100%_2px] bg-center bg-no-repeat [&::-webkit-slider-thumb]:h-3.5 [&::-webkit-slider-thumb]:w-2 [&::-webkit-slider-thumb]:appearance-none [&::-webkit-slider-thumb]:border-2 [&::-webkit-slider-thumb]:border-[#8c8c8c] [&::-webkit-slider-thumb]:bg-[#3a3a3a]">
                <div class="mt-px pr-1 text-center text-[10px] text-[#707070]">${s.panText}</div>
                <div class="mt-[21px] flex">
                    <div class="-mt-1.5 mr-4 ml-0.5 flex shrink-0 flex-col gap-[5px] pt-px">
                        ${icon('mute')}${icon('solo')}${icon('fx')}${icon('rec')}${icon('spk')}${icon('phase')}
                    </div>
                    ${fader('トラック ' + s.n + ' の音量', s.fader, s.lit, s.peak, s.clip)}
                </div>
            </div>`).join('');
    </script>
</body>
</html>
